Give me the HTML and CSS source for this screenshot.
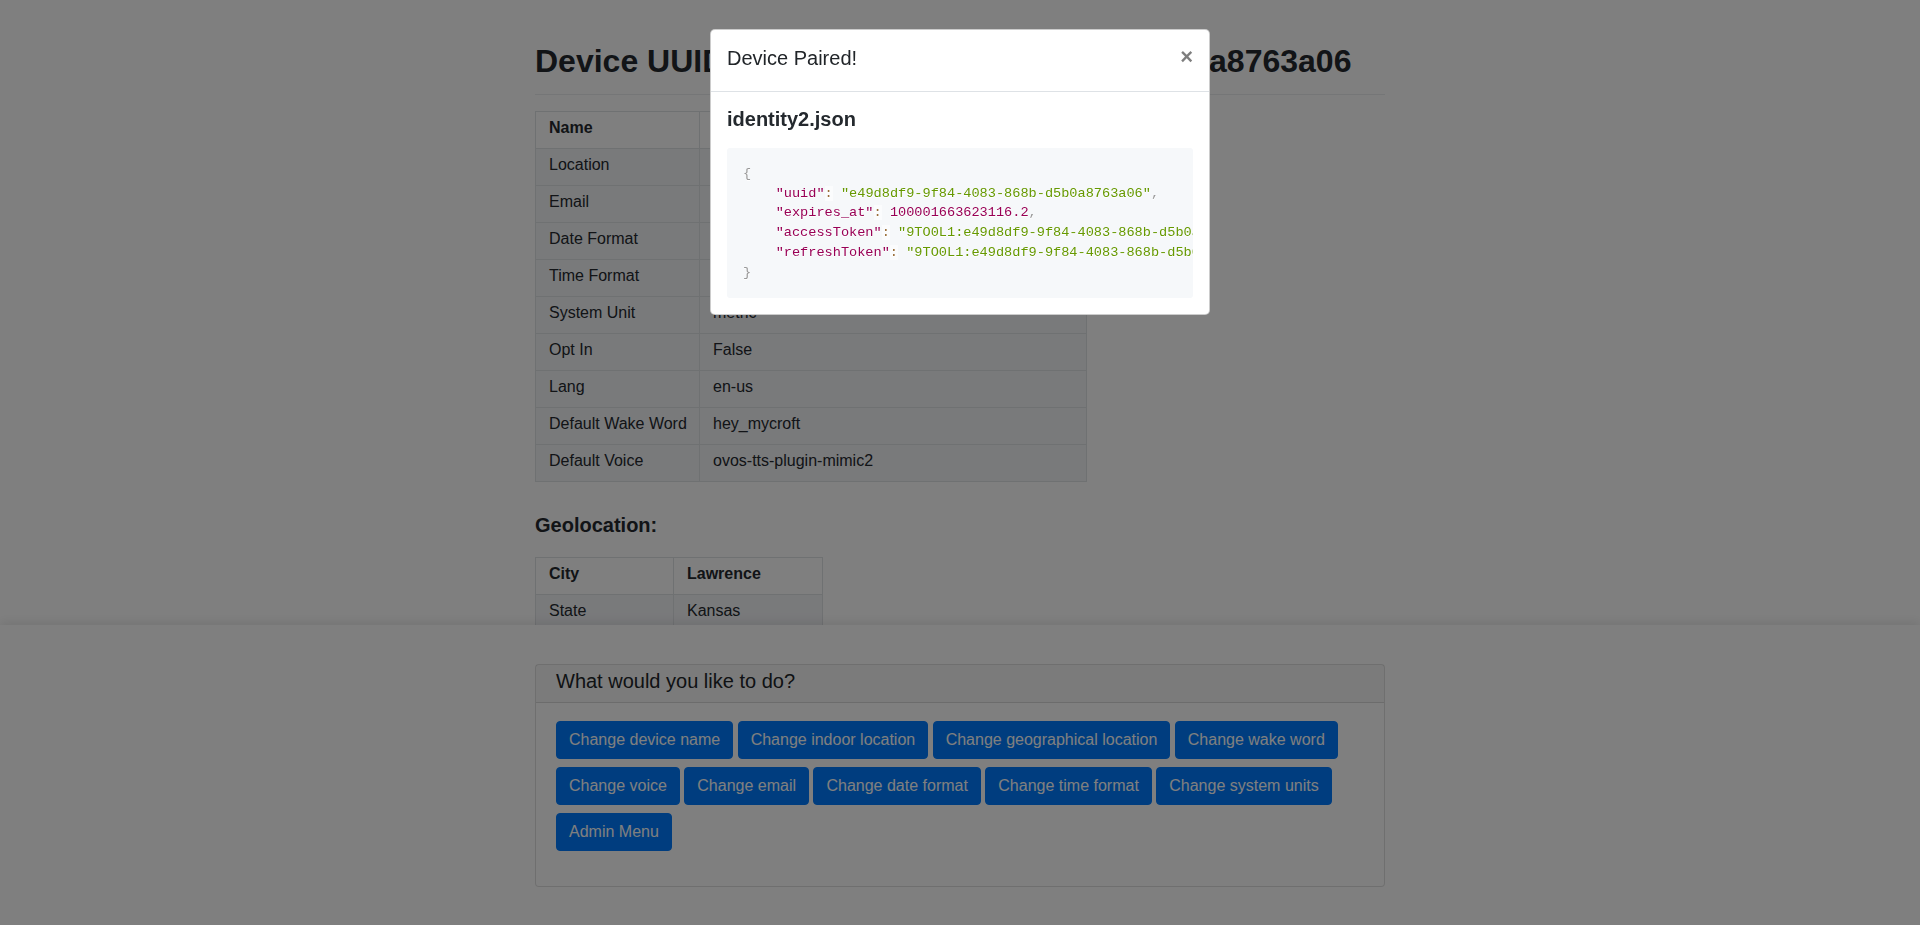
FILE: index.html
```html
<!DOCTYPE html>
<html lang="en">
<head>
<meta charset="utf-8">
<title>Device</title>
<link rel="stylesheet" href="styles.css">
</head>
<body>
<div class="app">
  <main class="output">
    <div class="container">
      <h1 class="title">Device UUID: e49d8df9-9f84-4083-868b-d5b0a8763a06</h1>
      <table class="kv info">
        <colgroup><col class="key"><col></colgroup>
        <thead>
          <tr><th>Name</th><th>Mycroft Mark 2 Development Device</th></tr>
        </thead>
        <tbody>
          <tr><td>Location</td><td>living room</td></tr>
          <tr><td>Email</td><td>user@example.com</td></tr>
          <tr><td>Date Format</td><td>DMY</td></tr>
          <tr><td>Time Format</td><td>full</td></tr>
          <tr><td>System Unit</td><td>metric</td></tr>
          <tr><td>Opt In</td><td>False</td></tr>
          <tr><td>Lang</td><td>en-us</td></tr>
          <tr><td>Default Wake Word</td><td>hey_mycroft</td></tr>
          <tr><td>Default Voice</td><td>ovos-tts-plugin-mimic2</td></tr>
        </tbody>
      </table>
      <h3 class="section">Geolocation:</h3>
      <table class="kv geo">
        <colgroup><col class="key"><col></colgroup>
        <thead>
          <tr><th>City</th><th>Lawrence</th></tr>
        </thead>
        <tbody>
          <tr><td>State</td><td>Kansas</td></tr>
          <tr><td>Country</td><td>United States</td></tr>
          <tr><td>Latitude</td><td>38.971669</td></tr>
          <tr><td>Longitude</td><td>-95.23525</td></tr>
          <tr><td>Timezone</td><td>America/Chicago</td></tr>
        </tbody>
      </table>
    </div>
  </main>
  <footer class="input-area">
    <div class="container">
      <div class="card">
        <h5 class="card-header">What would you like to do?</h5>
        <div class="card-body">
          <div class="actions">
            <button class="btn">Change device name</button>
            <button class="btn">Change indoor location</button>
            <button class="btn">Change geographical location</button>
            <button class="btn">Change wake word</button>
            <button class="btn">Change voice</button>
            <button class="btn">Change email</button>
            <button class="btn">Change date format</button>
            <button class="btn">Change time format</button>
            <button class="btn">Change system units</button>
            <button class="btn">Admin Menu</button>
          </div>
        </div>
      </div>
    </div>
  </footer>
</div>

<div class="backdrop"></div>
<div class="modal">
  <div class="modal-dialog">
    <div class="modal-content">
      <div class="modal-header">
        <h5 class="modal-title">Device Paired!</h5>
        <button class="close" aria-label="Close">×</button>
      </div>
      <div class="modal-body">
        <h3 class="file-name">identity2.json</h3>
<pre class="code"><span class="punc">{</span>
    <span class="prop">"uuid"</span><span class="op">:</span> <span class="str">"e49d8df9-9f84-4083-868b-d5b0a8763a06"</span><span class="punc">,</span>
    <span class="prop">"expires_at"</span><span class="op">:</span> <span class="num">100001663623116.2</span><span class="punc">,</span>
    <span class="prop">"accessToken"</span><span class="op">:</span> <span class="str">"9TO0L1:e49d8df9-9f84-4083-868b-d5b0a8763a06"</span><span class="punc">,</span>
    <span class="prop">"refreshToken"</span><span class="op">:</span> <span class="str">"9TO0L1:e49d8df9-9f84-4083-868b-d5b0a8763a06"</span>
<span class="punc">}</span></pre>
      </div>
    </div>
  </div>
</div>
</body>
</html>
```

FILE: styles.css
```css
* {
  box-sizing: border-box;
}

html,
body {
  margin: 0;
  height: 100%;
}

body {
  font-family: "Liberation Sans", Arial, sans-serif;
  font-size: 16px;
  line-height: 1.5;
  color: #24292e;
  background: #fff;
}

.app {
  height: 100vh;
  display: flex;
  flex-direction: column;
}

.container {
  width: 850px;
  margin: 0 auto;
}

/* ---------- output area ---------- */
.output {
  flex: 1 1 auto;
  min-height: 0;
  overflow: hidden;
  background: #fff;
}

.output .container {
  padding-top: 41px;
}

.title {
  margin: 0 0 16px;
  padding-bottom: 13px;
  font-size: 32px;
  line-height: 40px;
  font-weight: bold;
  border-bottom: 1px solid #eaecef;
}

.kv {
  border-collapse: collapse;
  border-spacing: 0;
  table-layout: fixed;
}

.kv th,
.kv td {
  padding: 4px 13px 8px;
  border: 1px solid #dfe2e5;
  text-align: left;
  white-space: nowrap;
  overflow: hidden;
}

.kv th {
  font-weight: bold;
}

.kv thead tr {
  background: #fff;
}

.kv tbody tr {
  background: #f3f4f7;
}

.info {
  width: 552px;
}

.info col.key {
  width: 164px;
}

.geo {
  width: 288px;
}

.geo col.key {
  width: 138px;
}

.section {
  margin: 31px 0 19px;
  font-size: 20px;
  line-height: 25px;
  font-weight: bold;
}

/* ---------- input area ---------- */
.input-area {
  flex: 0 0 300px;
  position: relative;
  background: #fff;
  padding-top: 39px;
  box-shadow: 0 -3px 10px rgba(0, 0, 0, 0.09);
}

.card {
  border: 1px solid rgba(0, 0, 0, 0.125);
  border-radius: 4px;
  background: #fff;
}

.card-header {
  margin: 0;
  padding: 4px 20px 9px;
  font-size: 20px;
  line-height: 24px;
  font-weight: normal;
  color: #212529;
  background: rgba(0, 0, 0, 0.03);
  border-bottom: 1px solid rgba(0, 0, 0, 0.125);
}

.card-body {
  padding: 18px 20px 27px;
}

.actions {
  display: flex;
  flex-wrap: wrap;
  column-gap: 4.45px;
}

.btn {
  margin: 0 0 8px;
  padding: 6px 12px;
  font-family: inherit;
  font-size: 16px;
  line-height: 24px;
  color: #fff;
  background: #007bff;
  border: 1px solid #007bff;
  border-radius: 4px;
  cursor: pointer;
}

/* ---------- modal ---------- */
.backdrop {
  position: fixed;
  inset: 0;
  background: rgba(0, 0, 0, 0.5);
  z-index: 10;
}

.modal {
  position: fixed;
  top: 0;
  left: 0;
  right: 0;
  z-index: 11;
}

.modal-dialog {
  width: 500px;
  margin: 29px auto;
}

.modal-content {
  background: #fff;
  border: 1px solid rgba(0, 0, 0, 0.2);
  border-radius: 5px;
  color: #212529;
}

.modal-header {
  display: flex;
  align-items: flex-start;
  padding: 14px 16px 19px;
  border-bottom: 1px solid #dee2e6;
}

.modal-title {
  margin: 0;
  font-size: 20px;
  line-height: 28px;
  font-weight: normal;
}

.close {
  margin: -14px -16px -19px auto;
  padding: 16px;
  background: transparent;
  border: 0;
  font-family: inherit;
  font-size: 22px;
  font-weight: bold;
  line-height: 1;
  color: #000;
  opacity: 0.5;
  text-shadow: 0 1px 0 #fff;
  cursor: pointer;
}

.modal-body {
  padding: 15px 16px 16px;
}

.file-name {
  margin: 0 0 16px;
  font-size: 20px;
  line-height: 25px;
  font-weight: bold;
  color: #24292e;
}

.code {
  margin: 0;
  padding: 16px;
  background: #f6f8fa;
  border-radius: 3px;
  overflow: hidden;
  font-family: "Liberation Mono", "DejaVu Sans Mono", monospace;
  font-size: 13.6px;
  line-height: 1.45;
  color: #000;
  text-shadow: 0 1px #fff;
  white-space: pre;
}

.code .punc {
  color: #999;
}

.code .prop,
.code .num {
  color: #905;
}

.code .str {
  color: #690;
}

.code .op {
  color: #9a6e3a;
  background: hsla(0, 0%, 100%, 0.5);
}
```
